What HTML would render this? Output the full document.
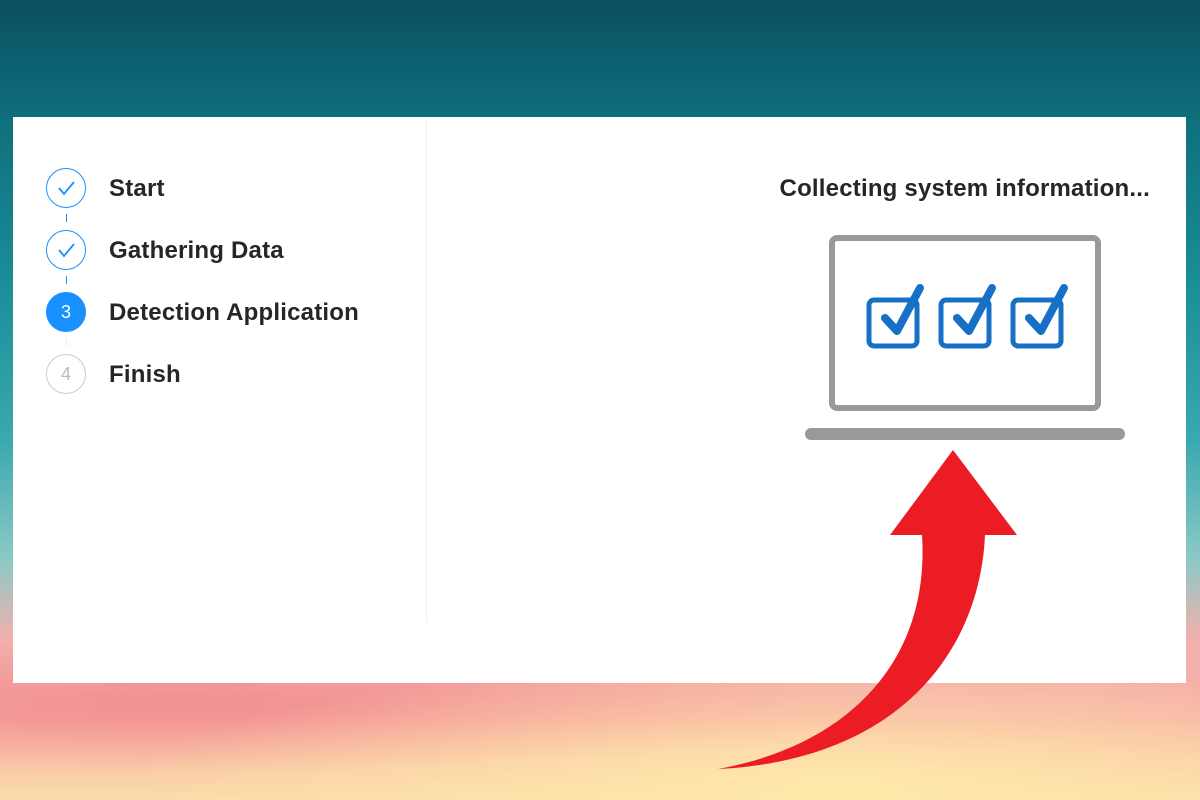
<!DOCTYPE html>
<html><head><style>
body{margin:0;width:1200px;height:800px;overflow:hidden;position:relative;font-family:"Liberation Sans",sans-serif;
background:linear-gradient(180deg,#0a4f60 0%,#0f6f7d 15%,#1a8d97 35%,#3aa8b0 55%,#8cc9c6 70%,#f2b0ac 80%,#f7b0a6 90%,#fbdca8 100%);}
.glow{position:absolute;left:0;top:640px;width:1200px;height:160px;background:radial-gradient(ellipse at 70% 90%,rgba(255,235,170,.9),rgba(255,200,170,0) 60%),radial-gradient(ellipse at 15% 40%,rgba(240,120,130,.6),rgba(240,120,130,0) 50%);}
.panel{position:absolute;left:13px;top:117px;width:1173px;height:566px;background:#fff;}
.div{position:absolute;left:413px;top:3px;width:1px;height:502px;background:#eee;}
.step{position:absolute;left:33px;width:40px;height:40px;border-radius:50%;box-sizing:border-box;border:1.5px solid #1890ff;color:#1890ff;text-align:center;line-height:38px;font-size:18px}
.lbl{position:absolute;left:96px;font-size:24px;color:#262626;font-weight:bold;letter-spacing:0.2px}
.ln{position:absolute;left:53px;width:1px;height:8px;background:#1890ff}
</style></head><body>
<div class="glow"></div>
<div class="panel">
 <div class="div"></div>
 <div class="step" style="top:51px"><svg width="37" height="37" viewBox="0 0 37 37"><path d="M11 19l5 6 10-12" fill="none" stroke="#1890ff" stroke-width="1.8"/></svg></div>
 <div class="lbl" style="top:58px">Start</div>
 <div class="ln" style="top:97px"></div>
 <div class="step" style="top:113px"><svg width="37" height="37" viewBox="0 0 37 37"><path d="M11 19l5 6 10-12" fill="none" stroke="#1890ff" stroke-width="1.8"/></svg></div>
 <div class="lbl" style="top:120px">Gathering Data</div>
 <div class="ln" style="top:159px"></div>
 <div class="step" style="top:175px;background:#1890ff;color:#fff">3</div>
 <div class="lbl" style="top:182px">Detection Application</div>
 <div class="ln" style="top:221px;background:#e8e8e8"></div>
 <div class="step" style="top:237px;border-color:#ccc;color:#bbb">4</div>
 <div class="lbl" style="top:244px">Finish</div>
 <div style="position:absolute;right:36px;top:58px;font-size:24px;color:#262626;font-weight:bold;letter-spacing:0.2px">Collecting system information...</div>
</div>
<svg style="position:absolute;left:0;top:0" width="1200" height="800">
 <rect x="832" y="238" width="266" height="170" rx="5" fill="none" stroke="#999" stroke-width="6"/>
 <rect x="805" y="428" width="320" height="12" rx="6" fill="#999"/>
 <g fill="none" stroke="#1570c6" stroke-width="5" stroke-linecap="round" stroke-linejoin="round">
  <rect x="869" y="300" width="48" height="46" rx="5"/><path d="M885 318l12 13 23-43" stroke-width="8"/>
  <rect x="941" y="300" width="48" height="46" rx="5"/><path d="M957 318l12 13 23-43" stroke-width="8"/>
  <rect x="1013" y="300" width="48" height="46" rx="5"/><path d="M1029 318l12 13 23-43" stroke-width="8"/>
 </g>
 <path d="M953,450 L1017,535 L985,535 C980,650 900,760 718,769 C850,745 930,660 922,535 L890,535 Z" fill="#ec1c24"/>
</svg>
</body></html>
